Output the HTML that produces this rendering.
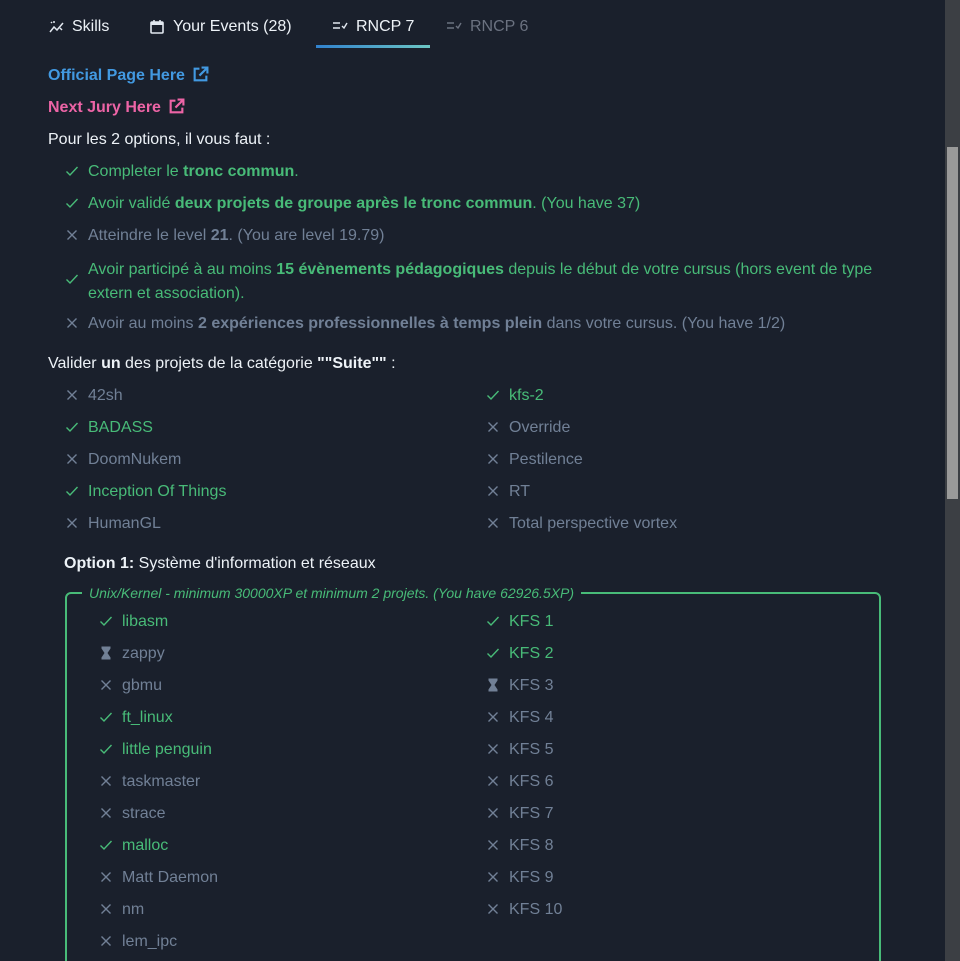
<!DOCTYPE html><html style="overflow:hidden;height:961px"><head><meta charset="utf-8"><style>
body{margin:0;background:#1a202c;font-family:"Liberation Sans",sans-serif;font-size:16px;color:#edf2f7;width:960px;height:961px;overflow:hidden;position:relative}
.sb{position:absolute;right:0;top:0;width:15px;height:961px;background:#3c3f44;z-index:5}
.thumb{position:absolute;left:2px;width:11px;top:147px;height:352px;background:#9a9a9a}
.tab{position:absolute;top:17px;white-space:nowrap;line-height:20px}
.t{position:absolute;white-space:nowrap;line-height:20px;margin-top:2px}
.g{color:#48bb78}.x{color:#718096}
svg{position:absolute}
.box{position:absolute;left:65px;top:592px;width:812px;height:400px;border:2px solid #48bb78;border-radius:6px}
.leg{position:absolute;left:82px;top:584px;background:#1a202c;padding:0 7px;font-style:italic;font-size:14px;color:#48bb78;line-height:18px}
</style></head><body>
<div class="sb"><div class="thumb"></div></div>
<svg width="0" height="0"><defs>
<symbol id="ck" viewBox="0 0 16 16"><path d="M2.5 8.5l3.5 3.5 7.5-8" fill="none" stroke="#48bb78" stroke-width="1.4"/></symbol>
<symbol id="xx" viewBox="0 0 16 16"><path d="M3.5 3.5l9 9M12.5 3.5l-9 9" fill="none" stroke="#718096" stroke-width="1.4"/></symbol>
<symbol id="hg" viewBox="0 0 16 16"><path d="M3.5 1.5h9v2L9.5 8l3 4.5v2h-9v-2l3-4.5-3-4.5z" fill="#718096"/></symbol>
<symbol id="ext" viewBox="0 0 16 16"><path d="M7 2.5H2.5v11h11V9M9 1.5h5.5V7M14.5 1.5L7 9" fill="none" stroke="currentColor" stroke-width="2"/></symbol>
</defs></svg>
<svg style="left:49px;top:19px" width="16" height="16" viewBox="0 0 16 16"><path d="M1 13l4-5 3 3 6-7M2 3l1 1M5 2v2M11 9l2 2" stroke="#e2e8f0" stroke-width="1.5" fill="none"/></svg>
<div class="tab" style="left:72px">Skills</div>
<svg style="left:150px;top:19px" width="14" height="15" viewBox="0 0 14 15"><rect x="1" y="3" width="12" height="11" rx="1" fill="none" stroke="#e2e8f0" stroke-width="1.6"/><rect x="1" y="3" width="12" height="3" fill="#e2e8f0"/><path d="M4 1v3M10 1v3" stroke="#e2e8f0" stroke-width="1.6"/></svg>
<div class="tab" style="left:173px">Your Events (28)</div>
<svg style="left:332px;top:20px" width="16" height="12" viewBox="0 0 16 12"><path d="M1 3h7M1 8h7M10 6l2 2 3-5" stroke="#e2e8f0" stroke-width="1.4" fill="none"/></svg>
<div class="tab" style="left:356px">RNCP 7</div>
<div style="position:absolute;left:316px;top:45px;width:114px;height:3px;background:linear-gradient(90deg,#3182ce,#6cc6c4)"></div>
<svg style="left:446px;top:20px" width="16" height="12" viewBox="0 0 16 12"><path d="M1 3h7M1 8h7M10 6l2 2 3-5" stroke="#6b7280" stroke-width="1.4" fill="none"/></svg>
<div class="tab" style="left:470px;color:#6b7280">RNCP 6</div>

<div class="t" style="left:48px;top:64px;color:#4299e1;font-weight:bold">Official Page Here</div>
<svg style="left:192px;top:66px;color:#4299e1" width="17" height="17"><use href="#ext"/></svg>
<div class="t" style="left:48px;top:96px;color:#ed64a6;font-weight:bold">Next Jury Here</div>
<svg style="left:168px;top:98px;color:#ed64a6" width="17" height="17"><use href="#ext"/></svg>
<div class="t" style="left:48px;top:128px">Pour les 2 options, il vous faut :</div>

<svg style="left:64px;top:163px" width="16" height="16"><use href="#ck"/></svg>
<div class="t g" style="left:88px;top:160px">Completer le <b>tronc commun</b>.</div>
<svg style="left:64px;top:195px" width="16" height="16"><use href="#ck"/></svg>
<div class="t g" style="left:88px;top:192px">Avoir validé <b>deux projets de groupe après le tronc commun</b>. (You have 37)</div>
<svg style="left:64px;top:227px" width="16" height="16"><use href="#xx"/></svg>
<div class="t x" style="left:88px;top:224px">Atteindre le level <b>21</b>. (You are level 19.79)</div>
<svg style="left:64px;top:271px" width="16" height="16"><use href="#ck"/></svg>
<div class="t g" style="left:88px;top:256px;line-height:24px;width:800px;white-space:normal">Avoir participé à au moins <b>15 évènements pédagogiques</b> depuis le début de votre cursus (hors event de type extern et association).</div>
<svg style="left:64px;top:315px" width="16" height="16"><use href="#xx"/></svg>
<div class="t x" style="left:88px;top:312px">Avoir au moins <b>2 expériences professionnelles à temps plein</b> dans votre cursus. (You have 1/2)</div>

<div class="t" style="left:48px;top:352px">Valider <b>un</b> des projets de la catégorie <b>""Suite""</b> :</div>

<svg style="left:64px;top:387px" width="16" height="16"><use href="#xx"/></svg><div class="t x" style="left:88px;top:384px">42sh</div>
<svg style="left:485px;top:387px" width="16" height="16"><use href="#ck"/></svg><div class="t g" style="left:509px;top:384px">kfs-2</div>
<svg style="left:64px;top:419px" width="16" height="16"><use href="#ck"/></svg><div class="t g" style="left:88px;top:416px">BADASS</div>
<svg style="left:485px;top:419px" width="16" height="16"><use href="#xx"/></svg><div class="t x" style="left:509px;top:416px">Override</div>
<svg style="left:64px;top:451px" width="16" height="16"><use href="#xx"/></svg><div class="t x" style="left:88px;top:448px">DoomNukem</div>
<svg style="left:485px;top:451px" width="16" height="16"><use href="#xx"/></svg><div class="t x" style="left:509px;top:448px">Pestilence</div>
<svg style="left:64px;top:483px" width="16" height="16"><use href="#ck"/></svg><div class="t g" style="left:88px;top:480px">Inception Of Things</div>
<svg style="left:485px;top:483px" width="16" height="16"><use href="#xx"/></svg><div class="t x" style="left:509px;top:480px">RT</div>
<svg style="left:64px;top:515px" width="16" height="16"><use href="#xx"/></svg><div class="t x" style="left:88px;top:512px">HumanGL</div>
<svg style="left:485px;top:515px" width="16" height="16"><use href="#xx"/></svg><div class="t x" style="left:509px;top:512px">Total perspective vortex</div>

<div class="t" style="left:64px;top:552px"><b>Option 1:</b> Système d'information et réseaux</div>
<div class="box"></div>
<div class="leg">Unix/Kernel - minimum 30000XP et minimum 2 projets. (You have 62926.5XP)</div>

<svg style="left:98px;top:613px" width="16" height="16"><use href="#ck"/></svg><div class="t g" style="left:122px;top:610px">libasm</div>
<svg style="left:98px;top:645px" width="16" height="16"><use href="#hg"/></svg><div class="t x" style="left:122px;top:642px">zappy</div>
<svg style="left:98px;top:677px" width="16" height="16"><use href="#xx"/></svg><div class="t x" style="left:122px;top:674px">gbmu</div>
<svg style="left:98px;top:709px" width="16" height="16"><use href="#ck"/></svg><div class="t g" style="left:122px;top:706px">ft_linux</div>
<svg style="left:98px;top:741px" width="16" height="16"><use href="#ck"/></svg><div class="t g" style="left:122px;top:738px">little penguin</div>
<svg style="left:98px;top:773px" width="16" height="16"><use href="#xx"/></svg><div class="t x" style="left:122px;top:770px">taskmaster</div>
<svg style="left:98px;top:805px" width="16" height="16"><use href="#xx"/></svg><div class="t x" style="left:122px;top:802px">strace</div>
<svg style="left:98px;top:837px" width="16" height="16"><use href="#ck"/></svg><div class="t g" style="left:122px;top:834px">malloc</div>
<svg style="left:98px;top:869px" width="16" height="16"><use href="#xx"/></svg><div class="t x" style="left:122px;top:866px">Matt Daemon</div>
<svg style="left:98px;top:901px" width="16" height="16"><use href="#xx"/></svg><div class="t x" style="left:122px;top:898px">nm</div>
<svg style="left:98px;top:933px" width="16" height="16"><use href="#xx"/></svg><div class="t x" style="left:122px;top:930px">lem_ipc</div>

<svg style="left:485px;top:613px" width="16" height="16"><use href="#ck"/></svg><div class="t g" style="left:509px;top:610px">KFS 1</div>
<svg style="left:485px;top:645px" width="16" height="16"><use href="#ck"/></svg><div class="t g" style="left:509px;top:642px">KFS 2</div>
<svg style="left:485px;top:677px" width="16" height="16"><use href="#hg"/></svg><div class="t x" style="left:509px;top:674px">KFS 3</div>
<svg style="left:485px;top:709px" width="16" height="16"><use href="#xx"/></svg><div class="t x" style="left:509px;top:706px">KFS 4</div>
<svg style="left:485px;top:741px" width="16" height="16"><use href="#xx"/></svg><div class="t x" style="left:509px;top:738px">KFS 5</div>
<svg style="left:485px;top:773px" width="16" height="16"><use href="#xx"/></svg><div class="t x" style="left:509px;top:770px">KFS 6</div>
<svg style="left:485px;top:805px" width="16" height="16"><use href="#xx"/></svg><div class="t x" style="left:509px;top:802px">KFS 7</div>
<svg style="left:485px;top:837px" width="16" height="16"><use href="#xx"/></svg><div class="t x" style="left:509px;top:834px">KFS 8</div>
<svg style="left:485px;top:869px" width="16" height="16"><use href="#xx"/></svg><div class="t x" style="left:509px;top:866px">KFS 9</div>
<svg style="left:485px;top:901px" width="16" height="16"><use href="#xx"/></svg><div class="t x" style="left:509px;top:898px">KFS 10</div>
</body></html>
